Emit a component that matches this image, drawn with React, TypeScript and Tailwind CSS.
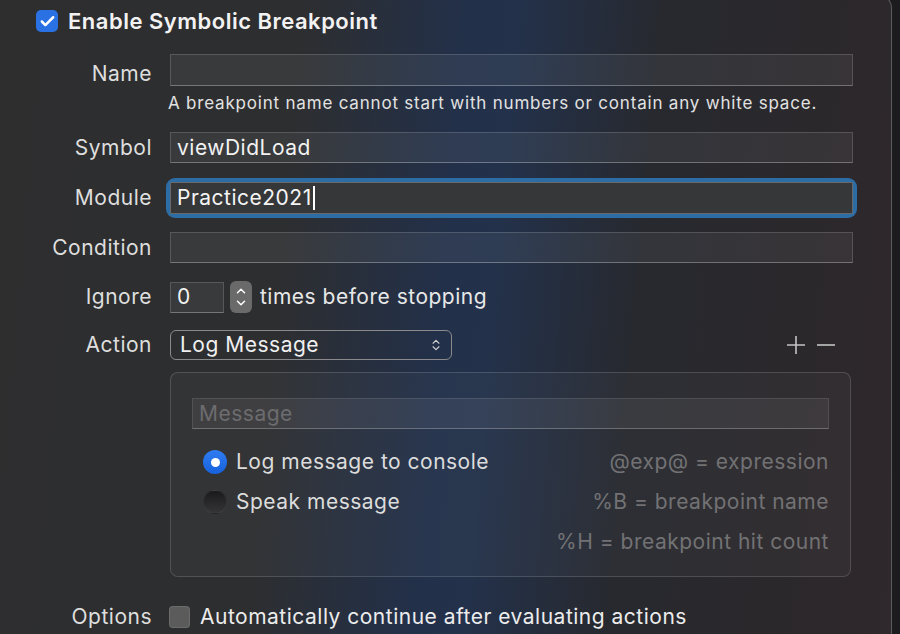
import { Check, ChevronUp, ChevronDown, ChevronsUpDown } from 'lucide-react'

const font = { fontFamily: 'Inter, "Noto Sans", sans-serif' }

function Field({ value, className = '' }: { value?: string; className?: string }) {
  return (
    <div
      className={`flex items-center px-[6px] bg-white/[0.06] border border-white/15 border-b-white/30 text-[21px] tracking-[0.5px] leading-[28px] text-[#f2f2f2] ${className}`}
    >
      {value}
    </div>
  )
}

function Label({ children, className = '' }: { children: React.ReactNode; className?: string }) {
  return (
    <div className={`w-[152px] shrink-0 text-right text-[21px] tracking-[0.5px] leading-[28px] text-[#dedede] ${className}`}>
      {children}
    </div>
  )
}

const hint = 'text-[21px] tracking-[0.5px] leading-[28px] text-[#727274]'

export default function App() {
  return (
    <div className="w-[900px] h-[634px] overflow-hidden flex bg-[#1c1c1e]" style={font}>
      <div className="w-[892px] shrink-0 -mt-[6px] h-[640px] rounded-tr-[14px] border-t border-r border-[#5c5c5e] bg-[linear-gradient(95deg,#2e2e2f_0%,#2d2e30_32%,#22304a_50%,#23314a_55%,#27292f_70%,#2b282b_88%,#2f282c_100%)] pt-[15px] pr-[38px]">
        {/* header */}
        <div className="flex items-center h-[22px] pl-[36px] gap-[10px]">
          <div className="w-[22px] h-[22px] rounded-[5px] bg-[#2a72e4] flex items-center justify-center">
            <Check className="w-[17px] h-[17px] text-white" strokeWidth={3.5} />
          </div>
          <span className="text-[22px] leading-[28px] font-semibold text-[#f2f2f2] tracking-[0.5px]">
            Enable Symbolic Breakpoint
          </span>
        </div>

        {/* name */}
        <div className="flex items-center gap-[18px] mt-[22px] h-[32px]">
          <Label className="pt-[7px]">Name</Label>
          <Field className="flex-1 h-[32px]" />
        </div>
        <div className="pl-[168px] mt-[6px] h-[22px] text-[17px] tracking-[0.8px] leading-[22px] text-[#e2e2e2]">
          A breakpoint name cannot start with numbers or contain any white space.
        </div>

        {/* symbol */}
        <div className="flex items-center gap-[18px] mt-[18px] h-[31px]">
          <Label>Symbol</Label>
          <Field className="flex-1 h-[31px]" value="viewDidLoad" />
        </div>

        {/* module */}
        <div className="flex items-center gap-[18px] mt-[19px] h-[32px]">
          <Label>Module</Label>
          <div className="flex-1 rounded-[5px] shadow-[0_0_0_4px_#2d6da6]">
            <div className="h-[32px] flex items-center px-[6px] bg-[#353739] border border-white/25 text-[21px] tracking-[0.5px] leading-[28px] text-[#f4f4f4]">
              Practice2021
              <span className="w-[2px] h-[24px] bg-white ml-[1px]" />
            </div>
          </div>
        </div>

        {/* condition */}
        <div className="flex items-center gap-[18px] mt-[18px] h-[31px]">
          <Label>Condition</Label>
          <Field className="flex-1 h-[31px]" />
        </div>

        {/* ignore */}
        <div className="flex items-center gap-[18px] mt-[18px] h-[32px]">
          <Label>Ignore</Label>
          <div className="flex items-center">
            <Field className="w-[54px] h-[31px]" value="0" />
            <div className="ml-[6px] w-[22px] h-[32px] rounded-[6px] bg-[#6a6a6b] flex flex-col items-center justify-center">
              <ChevronUp className="w-[14px] h-[14px] text-white -mb-[1px]" strokeWidth={2.5} />
              <ChevronDown className="w-[14px] h-[14px] text-white -mt-[1px]" strokeWidth={2.5} />
            </div>
            <span className="ml-[8px] text-[21px] tracking-[0.5px] leading-[28px] text-[#e8e8e8]">times before stopping</span>
          </div>
        </div>

        {/* action */}
        <div className="flex items-center gap-[18px] mt-[17px] h-[30px]">
          <Label>Action</Label>
          <div className="flex-1 flex items-center">
            <div className="w-[282px] h-[30px] rounded-[6px] border-[1.5px] border-[#8a8a8c] flex items-center pl-[9px] pr-[8px] text-[21px] tracking-[0.5px] leading-[28px] text-[#f0f0f0]">
              <span className="flex-1">Log Message</span>
              <ChevronsUpDown className="w-[14px] h-[14px] text-[#d0d0d0]" strokeWidth={2} />
            </div>
            <div className="ml-auto mr-[18px] flex items-center gap-[12px]">
              <svg width="18" height="18" viewBox="0 0 18 18">
                <path d="M9 0v18M0 9h18" stroke="#c4c4c4" strokeWidth="1.6" />
              </svg>
              <svg width="18" height="18" viewBox="0 0 18 18">
                <path d="M0 9h18" stroke="#c4c4c4" strokeWidth="1.6" />
              </svg>
            </div>
          </div>
        </div>

        {/* action box */}
        <div className="ml-[170px] mr-[2px] mt-[12px] h-[205px] rounded-[8px] border border-white/15 bg-white/[0.03] pt-[25px] px-[21px]">
          <div className="h-[31px] flex items-center px-[6px] bg-white/[0.06] border border-white/10 border-b-white/25 text-[21px] tracking-[0.5px] leading-[28px] text-[#6c6c6e]">
            Message
          </div>
          <div className="mt-[21px] flex flex-col gap-[16px]">
            <div className="flex items-center h-[24px]">
              <div className="w-[24px] h-[24px] rounded-full bg-[linear-gradient(180deg,#2f7cf2,#1762dd)] flex items-center justify-center ml-[11px]">
                <div className="w-[9px] h-[9px] rounded-full bg-white" />
              </div>
              <span className="ml-[9px] text-[21px] tracking-[0.5px] leading-[28px] text-[#dcdcdc]">Log message to console</span>
              <span className={`ml-auto ${hint}`}>@exp@ = expression</span>
            </div>
            <div className="flex items-center h-[24px]">
              <div className="w-[24px] h-[24px] rounded-full bg-[linear-gradient(180deg,#1a1a1b,#353537)] border border-white/5 ml-[11px]" />
              <span className="ml-[9px] text-[21px] tracking-[0.5px] leading-[28px] text-[#dcdcdc]">Speak message</span>
              <span className={`ml-auto ${hint}`}>%B = breakpoint name</span>
            </div>
            <div className="flex items-center h-[24px]">
              <span className={`ml-auto ${hint}`}>%H = breakpoint hit count</span>
            </div>
          </div>
        </div>

        {/* options */}
        <div className="flex items-center gap-[17px] mt-[29px] h-[22px]">
          <Label>Options</Label>
          <div className="flex items-center">
            <div className="w-[21px] h-[22px] rounded-[4px] bg-[#5b5b5c] border border-white/10" />
            <span className="ml-[10px] text-[21px] tracking-[0.5px] leading-[28px] text-[#ececec]">
              Automatically continue after evaluating actions
            </span>
          </div>
        </div>
      </div>
    </div>
  )
}
